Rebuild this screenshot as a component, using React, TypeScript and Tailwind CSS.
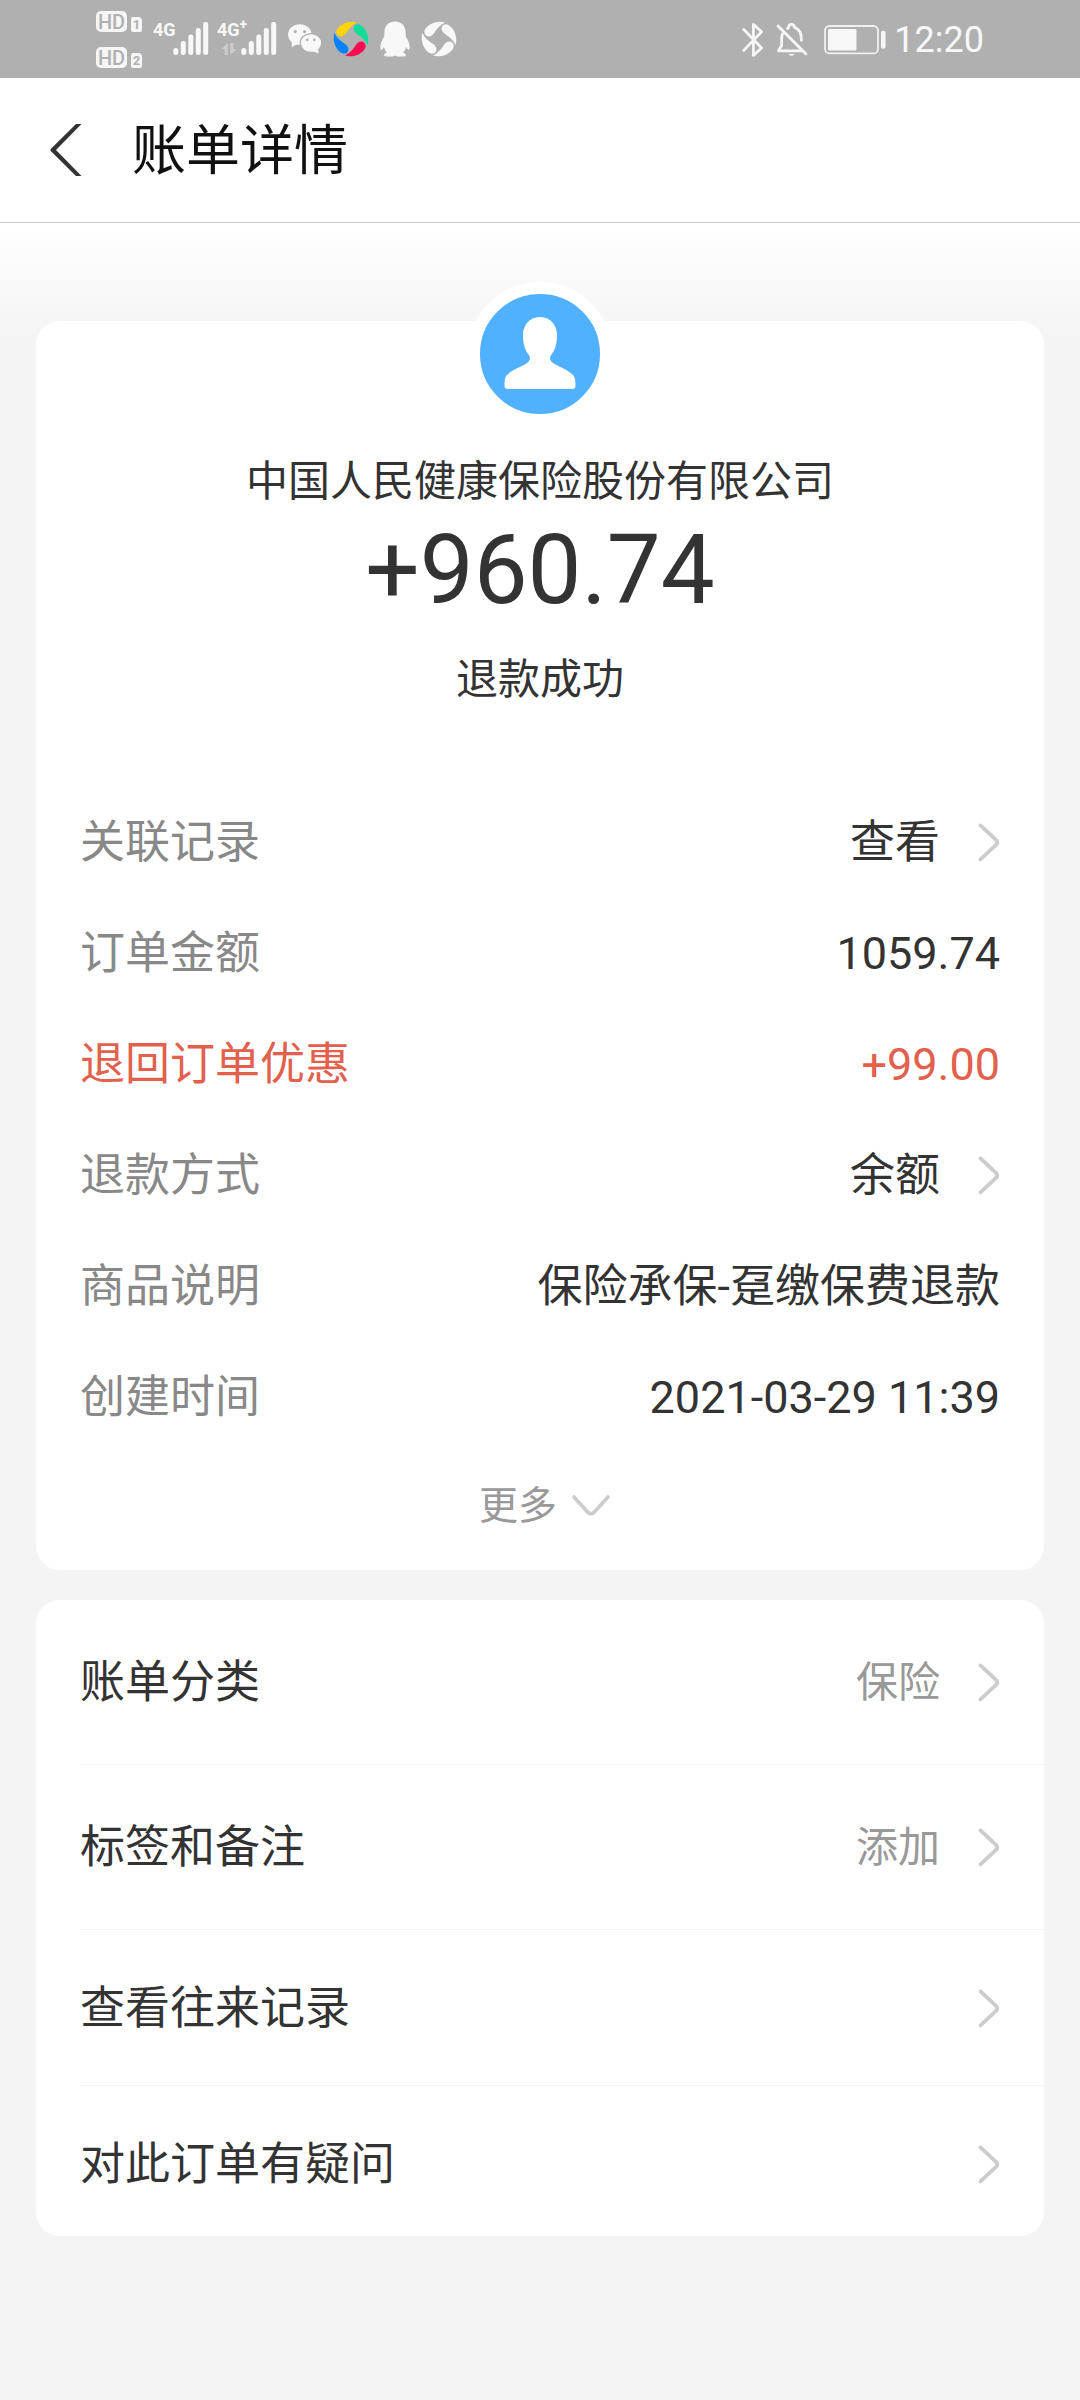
import React from 'react';
import clsx from 'clsx';

interface DetailRow {
    label: string;
    value: string;
    link?: boolean;
    highlight?: boolean;
}

interface ActionRow {
    label: string;
    value?: string;
    className: string;
}

const details: DetailRow[] = [
    { label: '关联记录', value: '查看', link: true },
    { label: '订单金额', value: '1059.74' },
    { label: '退回订单优惠', value: '+99.00', highlight: true },
    { label: '退款方式', value: '余额', link: true },
    { label: '商品说明', value: '保险承保-趸缴保费退款' },
    { label: '创建时间', value: '2021-03-29 11:39' },
];

const actions: ActionRow[] = [
    { label: '账单分类', value: '保险', className: 'pt-[49px] pb-[47px]' },
    { label: '标签和备注', value: '添加', className: 'pt-[49px] pb-[47px]' },
    { label: '查看往来记录', className: 'pt-[45px] pb-[42px]' },
    { label: '对此订单有疑问', className: 'pt-[45px] pb-[37px]' },
];

const ChevronRight = () => (
    <svg className="ml-[38px] h-10 w-[22px] shrink-0" viewBox="0 0 22 40" fill="none" stroke="#cccccc" strokeWidth="3.8" strokeLinecap="round" strokeLinejoin="round">
        <path d="M2.5 2.4 L18 16.9 Q20.4 19.4 18 21.9 L2.5 36.4" />
    </svg>
);

const ChevronDown = () => (
    <svg className="h-6 w-10" viewBox="0 0 40 24" fill="none" stroke="#cccccc" strokeWidth="3.6" strokeLinecap="round" strokeLinejoin="round">
        <path d="M3 3 L17 18.5 Q20 21 23 18.5 L37 3" />
    </svg>
);

const HdBadge = ({ sim }: { sim: string }) => (
    <div className="flex items-end gap-1">
        <span className="flex h-[21px] w-[31px] items-center justify-center rounded-[5px] bg-[#f6f6f6] text-[20px] leading-none font-medium text-[#b0b0b0]">HD</span>
        <span className="flex h-[15px] w-[11px] items-center justify-center rounded-xs rounded-tr-[4px] bg-[#f6f6f6] text-[13px] leading-none font-bold text-[#b0b0b0]">{sim}</span>
    </div>
);

const SignalBars = () => (
    <svg className="mt-[22px] h-[33px] w-9" viewBox="0 0 36 33" fill="#f8f8f8">
        <rect x="0.3" y="26" width="5" height="7" rx="2.5" />
        <rect x="7.8" y="19" width="5" height="14" rx="2.3" />
        <rect x="15.3" y="12.5" width="5" height="20.5" rx="2.3" />
        <rect x="22.8" y="6" width="5" height="27" rx="2.3" />
        <rect x="30.2" y="0" width="5" height="33" rx="2.3" />
    </svg>
);

const WeChatIcon = () => (
    <svg className="h-[30px] w-[34px]" viewBox="0 0 34 30">
        <g fill="#f8f8f8">
            <ellipse cx="11.8" cy="10.6" rx="11.7" ry="10.4" />
            <path d="M4 17 L3.6 23.2 L10 19.8 Z" />
        </g>
        <ellipse cx="23" cy="19" rx="11.4" ry="10.1" fill="#b0b0b0" />
        <g fill="#f8f8f8">
            <ellipse cx="23" cy="19" rx="10.1" ry="8.8" />
            <path d="M24 27 L30.6 29.5 L29.8 23 Z" />
        </g>
        <g fill="#b0b0b0">
            <circle cx="7.2" cy="7.6" r="1.6" />
            <circle cx="16.6" cy="7.6" r="1.6" />
            <circle cx="19.3" cy="15.8" r="1.4" />
            <circle cx="26.4" cy="15.8" r="1.4" />
        </g>
    </svg>
);

// four drops turned around the same centre
const SwirlIcon = ({ colors }: { colors: string[] }) => (
    <svg className="h-9 w-9" viewBox="0 0 36 36">
        {colors.map((color, i) => (
            <path
                key={i}
                fill={color}
                transform={`rotate(${i * 90} 18 18)`}
                d="M24 1.4 C16 -0.8 7.5 2.6 3.9 8.6 C2.2 12.4 4.6 15.4 7.6 15.4 C10.4 15.4 12.2 13.4 13.5 11.4 C16 7.4 19 4 24 1.4 Z"
            />
        ))}
    </svg>
);

const PenguinIcon = () => (
    <svg className="h-9 w-[30px]" viewBox="0 0 30 36" fill="#f8f8f8">
        <path d="M15 0.5 C8.5 0.5 4.4 5.2 4.4 11 L4.2 15.6 C2 19 0.3 23 0.4 26.4 C0.5 28.8 1.4 29.3 2.4 28.2 L4 26 C4.4 28.2 5.4 30 6.8 31.4 C4.8 32.2 3.8 33.4 4.2 34.6 C4.4 35.3 5 35.5 6 35.5 H13 L15 34.4 L17 35.5 H24 C25 35.5 25.6 35.3 25.8 34.6 C26.2 33.4 25.2 32.2 23.2 31.4 C24.6 30 25.6 28.2 26 26 L27.6 28.2 C28.6 29.3 29.5 28.8 29.6 26.4 C29.7 23 28 19 25.8 15.6 L25.6 11 C25.6 5.2 21.5 0.5 15 0.5 Z" />
    </svg>
);

const BluetoothIcon = () => (
    <svg className="h-9 w-[22px]" viewBox="0 0 22 36" fill="none" stroke="#f6f6f6" strokeWidth="2.8" strokeLinecap="round" strokeLinejoin="round">
        <path d="M1.8 7.5 L19.6 26 L11.4 33.4 V2.4 L19.6 9.8 L1.8 28.4" />
    </svg>
);

const BellOffIcon = () => (
    <svg className="h-9 w-8" viewBox="0 0 32 36" fill="none" stroke="#f6f6f6" strokeWidth="2.8" strokeLinecap="round" strokeLinejoin="round">
        <path d="M2 4 L30 32" />
        <path d="M6.4 12 C5.8 14 5.6 16 5.6 18 V23.5 L2.4 28.8 H26" />
        <path d="M11.6 6.6 C12 5.8 12.4 5.6 12.6 5.4 C12.4 1.4 18.6 1.4 18.4 5.4 C23.4 7 25.6 11.4 25.4 18.4" />
        <path d="M12.5 32 H18.5 C17.4 34.4 13.6 34.4 12.5 32 Z" fill="#f6f6f6" stroke="none" />
    </svg>
);

const BatteryIcon = () => (
    <svg className="h-[30px] w-[62px]" viewBox="0 0 62 30">
        <rect x="1" y="1" width="53" height="27.4" rx="4.5" fill="none" stroke="#f0f0f0" strokeWidth="1.8" />
        <rect x="4" y="4" width="28.5" height="21.4" rx="1.5" fill="#f8f8f8" />
        <rect x="57" y="5.8" width="4.6" height="18" rx="2" fill="#f6f6f6" />
    </svg>
);

const StatusBar = () => (
    <div className="flex h-[78px] items-start bg-[#b0b0b0] pr-24 pl-24 text-[#f8f8f8]">
        <div className="flex flex-col gap-[15px] pt-[11px]">
            <HdBadge sim="1" />
            <HdBadge sim="2" />
        </div>
        <span className="mt-[21px] ml-[11px] w-5 font-['Liberation_Sans_Narrow','Roboto',sans-serif] text-[18px] leading-none font-bold">4G</span>
        <SignalBars />
        <div className="mt-[21px] ml-2 flex w-6 flex-col font-['Liberation_Sans_Narrow','Roboto',sans-serif] text-[18px] leading-none font-bold">
            <span>4G<sup className="text-[14px]">+</sup></span>
            <svg className="mt-1 ml-1 h-3 w-4" viewBox="0 0 16 12" fill="#cccccc">
                <path d="M0.5 6 L6.8 0 V12 H3.6 V6 Z" />
                <path d="M15.5 6 L9.2 12 V0 H12.4 V6 Z" />
            </svg>
        </div>
        <SignalBars />
        <div className="mt-[21px] ml-[11px] flex items-center gap-[11px]">
            <WeChatIcon />
            <SwirlIcon colors={['#ffd400', '#12dc98', '#fa0a50', '#0a82ff']} />
            <PenguinIcon />
            <SwirlIcon colors={['#f8f8f8', '#f8f8f8', '#f8f8f8', '#f8f8f8']} />
        </div>
        <div className="mt-[22px] ml-auto flex h-9 items-center">
            <BluetoothIcon />
            <span className="ml-3"><BellOffIcon /></span>
            <span className="ml-4"><BatteryIcon /></span>
            <time className="ml-2 text-[36px] leading-9">12:20</time>
        </div>
    </div>
);

const Avatar = () => (
    <svg className="-mt-[39px] h-36 w-36 rounded-full border-12 border-white bg-[#4fb1ff]" viewBox="0 0 120 120" fill="white">
        <path d="M60 23 C71 23 77 31.5 77 41 C77 51 74.5 56.5 71.5 60.5 C69 64 70 67 73 69 C80 73.5 88 75.5 93.5 81.5 C95.4 84.5 95.5 87 95.5 92 Q95.5 95 92.5 95 H27.5 Q24.5 95 24.5 92 C24.5 87 24.6 84.5 26.5 81.5 C32 75.5 40 73.5 47 69 C50 67 51 64 48.5 60.5 C45.5 56.5 43 51 43 41 C43 31.5 49 23 60 23 Z" />
    </svg>
);

export default function App() {
    return (
        <div className="min-h-screen bg-[#f4f4f4] font-['Roboto','Noto_Sans_CJK_SC',sans-serif] text-[#333333]">
            <StatusBar />

            <header className="flex h-[145px] items-center border-b border-[#c8c8c8] bg-white pl-[50px]">
                <button type="button" aria-label="返回">
                    <svg className="h-[52px] w-8" viewBox="0 0 32 52" fill="#333333">
                        <path d="M26 0 H31.5 L6 26 L31.5 52 H26 L0.5 26.8 V25.2 Z" />
                    </svg>
                </button>
                <h1 className="ml-[50px] pt-1 text-[54px] leading-[80px] text-[#111111]">账单详情</h1>
            </header>

            <main className="bg-[linear-gradient(#ffffff,#f4f4f4_120px)] px-9 pt-[98px]">
                <section className="rounded-3xl bg-white px-11 pb-[34px]">
                    <div className="flex flex-col items-center">
                        <Avatar />
                        <h2 className="mt-[26px] text-[42px] leading-[60px]">中国人民健康保险股份有限公司</h2>
                        <p className="text-[96px] leading-[116px]">+960.74</p>
                        <p className="mt-[22px] text-[42px] leading-[60px]">退款成功</p>
                    </div>

                    <dl className="mt-[99px] flex flex-col gap-[43px] text-[45px] leading-[68px]">
                        {details.map((row) => (
                            <div key={row.label} className={clsx('flex justify-between', row.highlight && 'text-[#e2604c]')}>
                                <dt className={clsx(!row.highlight && 'text-[#888888]')}>{row.label}</dt>
                                <dd>
                                    {row.link ? (
                                        <a href="#" className="flex items-center">
                                            {row.value}
                                            <ChevronRight />
                                        </a>
                                    ) : (
                                        row.value
                                    )}
                                </dd>
                            </div>
                        ))}
                    </dl>

                    <button type="button" className="mx-auto mt-11 flex items-center gap-[14px] pl-[10px] text-[39px] leading-[60px] text-[#999999]">
                        更多
                        <ChevronDown />
                    </button>
                </section>

                <section className="mt-[30px] rounded-3xl bg-white pl-11">
                    {actions.map((row) => (
                        <a
                            key={row.label}
                            href="#"
                            className={clsx('flex items-center border-b border-[#f4f4f4] pr-11 text-[45px] leading-[68px] last:border-b-0', row.className)}
                        >
                            {row.label}
                            <span className="ml-auto text-[42px] text-[#999999]">{row.value}</span>
                            <ChevronRight />
                        </a>
                    ))}
                </section>
            </main>
        </div>
    );
}
